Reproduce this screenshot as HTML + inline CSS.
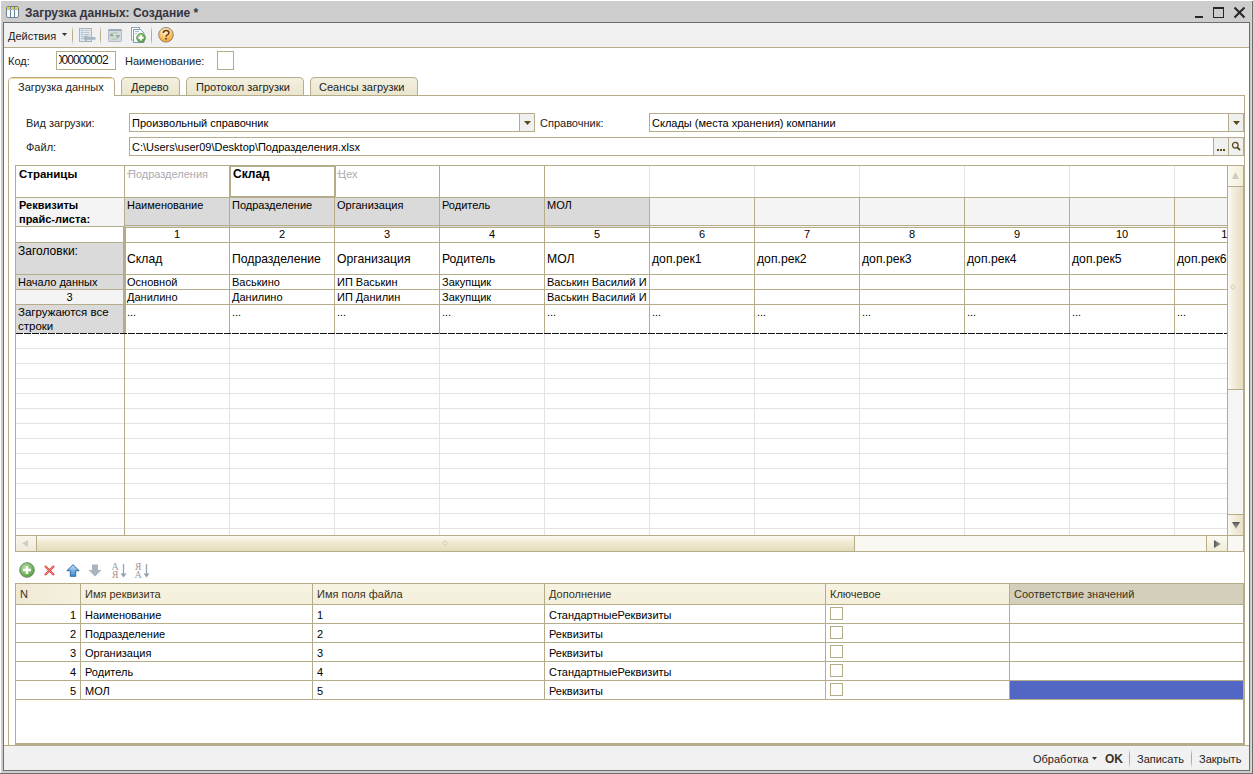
<!DOCTYPE html>
<html><head><meta charset="utf-8"><style>
html,body{margin:0;padding:0;width:1253px;height:774px;overflow:hidden;background:#fff}
body{position:relative;font-family:"Liberation Sans",sans-serif}
body>div,body>svg{position:absolute}
svg{position:absolute;overflow:visible}
</style></head><body>
<div style="left:0px;top:0px;width:1253px;height:774px;background:#ffffff;"></div>
<div style="left:1px;top:1px;width:1252px;height:773px;background:#cdcdcd;"></div>
<div style="left:3px;top:22px;width:1247px;height:749px;box-sizing:border-box;border:1px solid #6d6d6d;background:#ffffff;"></div>
<div style="left:1252px;top:1px;width:1px;height:773px;background:#6e6e6e;"></div>
<div style="left:0px;top:773px;width:1253px;height:1px;background:#6e6e6e;"></div>
<div style="left:1251px;top:1px;width:1px;height:772px;background:#d6d6d6;"></div>
<svg style="left:6px;top:6px" width="13" height="12" viewBox="0 0 13 12"><rect x="0.5" y="0.5" width="12" height="11" rx="1.5" fill="#f4fbff" stroke="#6f8290"/><line x1="4.5" y1="0.5" x2="4.5" y2="11.5" stroke="#6f8290"/><line x1="8.5" y1="0.5" x2="8.5" y2="11.5" stroke="#6f8290"/><rect x="1" y="1" width="3" height="2" fill="#f5cf1a"/><rect x="5" y="1" width="3" height="2" fill="#f5cf1a"/><rect x="9" y="1" width="3" height="2" fill="#f5cf1a"/><rect x="1" y="3" width="11" height="1" fill="#a9bccc"/></svg>
<div style="left:25px;top:7px;font-size:12px;line-height:13.404px;font-weight:700;color:#34343f;white-space:pre;">Загрузка данных: Создание *</div>
<div style="left:1195px;top:16px;width:8px;height:2px;background:#262626;"></div>
<div style="left:1213px;top:7px;width:11px;height:11px;box-sizing:border-box;border:1px solid #262626;"></div>
<div style="left:1213px;top:7px;width:11px;height:2px;background:#262626;"></div>
<svg style="left:1233px;top:6px" width="13" height="13" viewBox="0 0 13 13"><path d="M1.5 1.5 L11.5 11.5 M11.5 1.5 L1.5 11.5" stroke="#262626" stroke-width="2"/></svg>
<div style="left:4px;top:23px;width:1245px;height:24px;background:#f1f1f1;"></div>
<div style="left:4px;top:47px;width:1245px;height:1px;background:#b5ad89;"></div>
<div style="left:8px;top:30px;font-size:11px;line-height:12.287px;font-weight:400;color:#222;white-space:pre;">Действия</div>
<svg style="left:62px;top:33px" width="5" height="3"><path d="M0 0 H5 L2.5 3 Z" fill="#333"/></svg>
<div style="left:72px;top:26px;width:1px;height:19px;background:linear-gradient(#f0f0f0,#b5ad89 30%,#b5ad89 70%,#f0f0f0);"></div>
<div style="left:100px;top:26px;width:1px;height:19px;background:linear-gradient(#f0f0f0,#b5ad89 30%,#b5ad89 70%,#f0f0f0);"></div>
<div style="left:151px;top:26px;width:1px;height:19px;background:linear-gradient(#f0f0f0,#b5ad89 30%,#b5ad89 70%,#f0f0f0);"></div>
<svg style="left:74px;top:24px" width="24" height="22" viewBox="74 24 24 22"><rect x="79.5" y="28.5" width="12" height="13" fill="#e2e7eb" stroke="#a6b3bf"/><path d="M81 30.5h2M81 32.5h2M81 34.5h2M81 36.5h2M81 38.5h2" stroke="#9cc0dc"/><path d="M83.5 30.5h6M83.5 32.5h6M83.5 34.5h6M83.5 36.5h6" stroke="#c0c9d1"/><path d="M83 38.3 L87 34.5 V37 H95.5 V39.8 H87 V42.3 Z" fill="#a8b4be"/></svg>
<svg style="left:104px;top:24px" width="22" height="22" viewBox="104 24 22 22"><rect x="108.5" y="29.5" width="13" height="12" rx="0.8" fill="#d3d9de" stroke="#b3bcc4"/><rect x="108.5" y="29" width="13" height="2" fill="#a3adb6"/><path d="M111.5 36 a3.6 3.6 0 0 1 6.3 -2.4 M117.8 36 a3.6 3.6 0 0 1 -6.3 2.4" stroke="#a9c9a4" fill="none" stroke-width="1"/><path d="M109 36.3 L111.5 32.8 L114 36.3 Z M115.3 35 L117.8 38.5 L120.3 35 Z" fill="#98ae93"/></svg>
<svg style="left:126px;top:24px" width="24" height="22" viewBox="126 24 24 22"><rect x="131.5" y="27.5" width="8" height="12.5" fill="#fff" stroke="#8fa3b8"/><path d="M133.5 29.5 h7 l3.5 3.5 v9.5 h-10.5 z" fill="#f7fbff" stroke="#7f97b0"/><path d="M135 31.5h4M135 33.5h2" stroke="#a9b7c6"/><defs><radialGradient id="cg" cx="0.4" cy="0.35" r="0.7"><stop offset="0" stop-color="#a6dc8e"/><stop offset="1" stop-color="#48983a"/></radialGradient></defs><circle cx="141" cy="37.8" r="4.4" fill="url(#cg)" stroke="#5f8f55" stroke-width="0.8"/><path d="M141 35.2v5.2M138.4 37.8h5.2" stroke="#fff" stroke-width="2"/></svg>
<svg style="left:157px;top:26px" width="18" height="18" viewBox="157 26 18 18"><defs><radialGradient id="hg" cx="0.45" cy="0.25" r="0.75"><stop offset="0" stop-color="#fff4dc"/><stop offset="0.6" stop-color="#f9c46a"/><stop offset="1" stop-color="#f0a030"/></radialGradient></defs><circle cx="166" cy="34.8" r="7.3" fill="url(#hg)" stroke="#8c7a66" stroke-width="0.9"/><path d="M163.3 33 q0 -2.6 2.8 -2.6 q2.8 0 2.8 2.3 q0 1.5 -1.6 2.2 q-1.2 0.5 -1.2 1.9" fill="none" stroke="#6b3d1a" stroke-width="1.5"/><rect x="165.2" y="37.9" width="1.7" height="1.6" fill="#6b3d1a"/></svg>
<div style="left:8px;top:55px;font-size:11px;line-height:12.287px;font-weight:400;color:#222;white-space:pre;">Код:</div>
<div style="left:56px;top:51px;width:60px;height:19px;box-sizing:border-box;border:1px solid #b5ad89;background:#fff;"></div>
<div style="left:59px;top:52px;width:56px;height:17px;overflow:hidden"><div style="position:absolute;left:-3.3px;top:1px;font-size:12px;line-height:14px;white-space:pre;color:#111;letter-spacing:-0.9px">000000002</div></div>
<div style="left:125px;top:55px;font-size:11px;line-height:12.287px;font-weight:400;color:#222;white-space:pre;">Наименование:</div>
<div style="left:217px;top:51px;width:17px;height:19px;box-sizing:border-box;border:1px solid #b5ad89;background:#fff;"></div>
<div style="left:121px;top:77px;width:59px;height:19px;box-sizing:border-box;border:1px solid #b5ad89;border-bottom:none;border-radius:5px 5px 0 0;background:linear-gradient(#f3f0e0,#e9e4cc)"></div>
<div style="left:186px;top:77px;width:118px;height:19px;box-sizing:border-box;border:1px solid #b5ad89;border-bottom:none;border-radius:5px 5px 0 0;background:linear-gradient(#f3f0e0,#e9e4cc)"></div>
<div style="left:310px;top:77px;width:108px;height:19px;box-sizing:border-box;border:1px solid #b5ad89;border-bottom:none;border-radius:5px 5px 0 0;background:linear-gradient(#f3f0e0,#e9e4cc)"></div>
<div style="left:8px;top:95px;width:1237px;height:1px;background:#b5ad89;"></div>
<div style="left:8px;top:77px;width:107px;height:19px;box-sizing:border-box;border:1px solid #b5ad89;border-bottom:none;border-radius:5px 5px 0 0;background:#fff"></div>
<div style="left:10px;top:78px;width:103px;height:1px;background:#f9d79a;border-radius:3px 3px 0 0"></div>
<div style="left:18px;top:81px;font-size:11px;line-height:12.287px;font-weight:400;color:#222;white-space:pre;">Загрузка данных</div>
<div style="left:131px;top:81px;font-size:11px;line-height:12.287px;font-weight:400;color:#222;white-space:pre;">Дерево</div>
<div style="left:196px;top:81px;font-size:11px;line-height:12.287px;font-weight:400;color:#222;white-space:pre;">Протокол загрузки</div>
<div style="left:319px;top:81px;font-size:11px;line-height:12.287px;font-weight:400;color:#222;white-space:pre;">Сеансы загрузки</div>
<div style="left:8px;top:96px;width:1px;height:650px;background:#b5ad89;"></div>
<div style="left:1244px;top:95px;width:1px;height:651px;background:#b5ad89;"></div>
<div style="left:4px;top:745px;width:1245px;height:1px;background:#b5ad89;"></div>
<div style="left:26px;top:117px;font-size:11px;line-height:12.287px;font-weight:400;color:#222;white-space:pre;">Вид загрузки:</div>
<div style="left:129px;top:113px;width:406px;height:19px;box-sizing:border-box;border:1px solid #b5ad89;background:#fff;"></div>
<div style="left:519px;top:114px;width:15px;height:17px;background:#f0f0f0;border-left:1px solid #b5ad89;box-sizing:border-box"></div>
<svg style="left:524px;top:121px" width="7" height="4"><path d="M0 0 H7 L3.5 4 Z" fill="#5a4a1a"/></svg>
<div style="left:540px;top:117px;font-size:11px;line-height:12.287px;font-weight:400;color:#222;white-space:pre;">Справочник:</div>
<div style="left:649px;top:113px;width:595px;height:19px;box-sizing:border-box;border:1px solid #b5ad89;background:#fff;"></div>
<div style="left:1228px;top:114px;width:15px;height:17px;background:#f0f0f0;border-left:1px solid #b5ad89;box-sizing:border-box"></div>
<svg style="left:1233px;top:121px" width="7" height="4"><path d="M0 0 H7 L3.5 4 Z" fill="#5a4a1a"/></svg>
<div style="left:652px;top:117px;font-size:11px;line-height:12.287px;font-weight:400;color:#000;white-space:pre;">Склады (места хранения) компании</div>
<div style="left:132px;top:117px;font-size:11px;line-height:12.287px;font-weight:400;color:#000;white-space:pre;">Произвольный справочник</div>
<div style="left:26px;top:141px;font-size:11px;line-height:12.287px;font-weight:400;color:#222;white-space:pre;">Файл:</div>
<div style="left:129px;top:137px;width:1115px;height:19px;box-sizing:border-box;border:1px solid #b5ad89;background:#fff;"></div>
<div style="left:1213px;top:138px;width:15px;height:17px;background:#f0f0f0;border-left:1px solid #b5ad89;box-sizing:border-box"></div>
<div style="left:1228px;top:138px;width:15px;height:17px;background:#f0f0f0;border-left:1px solid #b5ad89;box-sizing:border-box"></div>
<div style="left:1217px;top:149px;width:2px;height:2px;background:#5a4a1a;"></div>
<div style="left:1220px;top:149px;width:2px;height:2px;background:#5a4a1a;"></div>
<div style="left:1223px;top:149px;width:2px;height:2px;background:#5a4a1a;"></div>
<svg style="left:1230px;top:140px" width="11" height="12"><circle cx="5.3" cy="5.2" r="2.8" fill="none" stroke="#5a4a1a" stroke-width="1.3"/><path d="M7.3 7.3 L10 10" stroke="#5a4a1a" stroke-width="1.8"/></svg>
<div style="left:132px;top:141px;font-size:11px;line-height:12.287px;font-weight:400;color:#000;white-space:pre;">C:\Users\user09\Desktop\Подразделения.xlsx</div>
<div style="left:16px;top:198px;width:108px;height:28px;background:#f4f4f4;"></div>
<div style="left:125px;top:198px;width:104px;height:29px;background:#dadada;"></div>
<div style="left:230px;top:198px;width:104px;height:29px;background:#dadada;"></div>
<div style="left:335px;top:198px;width:104px;height:29px;background:#dadada;"></div>
<div style="left:440px;top:198px;width:104px;height:29px;background:#dadada;"></div>
<div style="left:545px;top:198px;width:104px;height:29px;background:#dadada;"></div>
<div style="left:650px;top:198px;width:578px;height:29px;background:#f4f4f4;"></div>
<div style="left:16px;top:243px;width:107px;height:31px;background:#dadada;"></div>
<div style="left:16px;top:275px;width:107px;height:14px;background:#dadada;"></div>
<div style="left:16px;top:290px;width:107px;height:14px;background:#f4f4f4;"></div>
<div style="left:16px;top:305px;width:107px;height:28px;background:#dadada;"></div>
<div style="left:16px;top:348px;width:1212px;height:1px;background:#e3e3e3;"></div>
<div style="left:16px;top:363px;width:1212px;height:1px;background:#e3e3e3;"></div>
<div style="left:16px;top:378px;width:1212px;height:1px;background:#e3e3e3;"></div>
<div style="left:16px;top:393px;width:1212px;height:1px;background:#e3e3e3;"></div>
<div style="left:16px;top:408px;width:1212px;height:1px;background:#e3e3e3;"></div>
<div style="left:16px;top:423px;width:1212px;height:1px;background:#e3e3e3;"></div>
<div style="left:16px;top:438px;width:1212px;height:1px;background:#e3e3e3;"></div>
<div style="left:16px;top:453px;width:1212px;height:1px;background:#e3e3e3;"></div>
<div style="left:16px;top:468px;width:1212px;height:1px;background:#e3e3e3;"></div>
<div style="left:16px;top:483px;width:1212px;height:1px;background:#e3e3e3;"></div>
<div style="left:16px;top:498px;width:1212px;height:1px;background:#e3e3e3;"></div>
<div style="left:16px;top:513px;width:1212px;height:1px;background:#e3e3e3;"></div>
<div style="left:16px;top:528px;width:1212px;height:1px;background:#e3e3e3;"></div>
<div style="left:229px;top:334px;width:1px;height:201px;background:#e3e3e3;"></div>
<div style="left:229px;top:166px;width:1px;height:31px;background:#e3e3e3;"></div>
<div style="left:334px;top:334px;width:1px;height:201px;background:#e3e3e3;"></div>
<div style="left:334px;top:166px;width:1px;height:31px;background:#e3e3e3;"></div>
<div style="left:439px;top:334px;width:1px;height:201px;background:#e3e3e3;"></div>
<div style="left:439px;top:166px;width:1px;height:31px;background:#e3e3e3;"></div>
<div style="left:544px;top:334px;width:1px;height:201px;background:#e3e3e3;"></div>
<div style="left:544px;top:166px;width:1px;height:31px;background:#e3e3e3;"></div>
<div style="left:649px;top:334px;width:1px;height:201px;background:#e3e3e3;"></div>
<div style="left:649px;top:166px;width:1px;height:31px;background:#e3e3e3;"></div>
<div style="left:754px;top:334px;width:1px;height:201px;background:#e3e3e3;"></div>
<div style="left:754px;top:166px;width:1px;height:31px;background:#e3e3e3;"></div>
<div style="left:859px;top:334px;width:1px;height:201px;background:#e3e3e3;"></div>
<div style="left:859px;top:166px;width:1px;height:31px;background:#e3e3e3;"></div>
<div style="left:964px;top:334px;width:1px;height:201px;background:#e3e3e3;"></div>
<div style="left:964px;top:166px;width:1px;height:31px;background:#e3e3e3;"></div>
<div style="left:1069px;top:334px;width:1px;height:201px;background:#e3e3e3;"></div>
<div style="left:1069px;top:166px;width:1px;height:31px;background:#e3e3e3;"></div>
<div style="left:1174px;top:334px;width:1px;height:201px;background:#e3e3e3;"></div>
<div style="left:1174px;top:166px;width:1px;height:31px;background:#e3e3e3;"></div>
<div style="left:15px;top:165px;width:1213px;height:1px;background:#b5ad89;"></div>
<div style="left:15px;top:197px;width:1213px;height:1px;background:#b5ad89;"></div>
<div style="left:15px;top:226px;width:110px;height:1px;background:#b5ad89;"></div>
<div style="left:125px;top:225px;width:1103px;height:1px;background:#b5ad89;"></div>
<div style="left:125px;top:227px;width:1103px;height:1px;background:#b5ad89;"></div>
<div style="left:15px;top:242px;width:1213px;height:1px;background:#b5ad89;"></div>
<div style="left:15px;top:274px;width:1213px;height:1px;background:#b5ad89;"></div>
<div style="left:15px;top:289px;width:1213px;height:1px;background:#b5ad89;"></div>
<div style="left:15px;top:304px;width:1213px;height:1px;background:#b5ad89;"></div>
<div style="left:15px;top:165px;width:1px;height:371px;background:#b5ad89;"></div>
<div style="left:124px;top:165px;width:1px;height:62px;background:#b5ad89;"></div>
<div style="left:123px;top:227px;width:3px;height:107px;background:#b5ad89;"></div>
<div style="left:124px;top:334px;width:1px;height:202px;background:#b5ad89;"></div>
<div style="left:229px;top:165px;width:1px;height:33px;background:#b5ad89;"></div>
<div style="left:334px;top:165px;width:1px;height:33px;background:#b5ad89;"></div>
<div style="left:439px;top:165px;width:1px;height:33px;background:#b5ad89;"></div>
<div style="left:544px;top:165px;width:1px;height:33px;background:#b5ad89;"></div>
<div style="left:229px;top:197px;width:1px;height:137px;background:#b5ad89;"></div>
<div style="left:334px;top:197px;width:1px;height:137px;background:#b5ad89;"></div>
<div style="left:439px;top:197px;width:1px;height:137px;background:#b5ad89;"></div>
<div style="left:544px;top:197px;width:1px;height:137px;background:#b5ad89;"></div>
<div style="left:649px;top:197px;width:1px;height:137px;background:#b5ad89;"></div>
<div style="left:754px;top:197px;width:1px;height:137px;background:#b5ad89;"></div>
<div style="left:859px;top:197px;width:1px;height:137px;background:#b5ad89;"></div>
<div style="left:964px;top:197px;width:1px;height:137px;background:#b5ad89;"></div>
<div style="left:1069px;top:197px;width:1px;height:137px;background:#b5ad89;"></div>
<div style="left:1174px;top:197px;width:1px;height:137px;background:#b5ad89;"></div>
<div style="left:229px;top:165px;width:107px;height:33px;box-sizing:border-box;border:1px solid #b5ad89;border-width:2px"></div>
<div style="left:16px;top:333px;width:1212px;height:1px;background:repeating-linear-gradient(90deg,#111 0 7px,transparent 7px 8px)"></div>
<div style="left:15px;top:535px;width:1229px;height:1px;background:#b5ad89;"></div>
<div style="left:19px;top:168px;font-size:11.5px;line-height:12.845px;font-weight:700;color:#000;white-space:pre;">Страницы</div>
<div style="left:128px;top:168px;font-size:11px;line-height:12.287px;font-weight:400;color:#ababb4;white-space:pre;">Подразделения</div>
<div style="left:127px;top:173px;width:8px;height:1px;background:#b8b8b8;"></div>
<div style="left:233px;top:168px;font-size:12px;line-height:13.404px;font-weight:700;color:#000;white-space:pre;">Склад</div>
<div style="left:338px;top:168px;font-size:11px;line-height:12.287px;font-weight:400;color:#ababb4;white-space:pre;">Цех</div>
<div style="left:337px;top:173px;width:8px;height:1px;background:#b8b8b8;"></div>
<div style="left:19px;top:199px;font-size:11px;line-height:12.287px;font-weight:700;color:#000;white-space:pre;">Реквизиты</div>
<div style="left:19px;top:213px;font-size:11px;line-height:12.287px;font-weight:700;color:#000;white-space:pre;">прайс-листа:</div>
<div style="left:127px;top:199px;font-size:11px;line-height:12.287px;font-weight:400;color:#000;white-space:pre;">Наименование</div>
<div style="left:232px;top:199px;font-size:11px;line-height:12.287px;font-weight:400;color:#000;white-space:pre;">Подразделение</div>
<div style="left:337px;top:199px;font-size:11px;line-height:12.287px;font-weight:400;color:#000;white-space:pre;">Организация</div>
<div style="left:442px;top:199px;font-size:11px;line-height:12.287px;font-weight:400;color:#000;white-space:pre;">Родитель</div>
<div style="left:547px;top:199px;font-size:11px;line-height:12.287px;font-weight:400;color:#000;white-space:pre;">МОЛ</div>
<div style="left:125px;top:228px;font-size:11px;line-height:12.287px;font-weight:400;color:#000;white-space:pre;width:104px;text-align:center;">1</div>
<div style="left:230px;top:228px;font-size:11px;line-height:12.287px;font-weight:400;color:#000;white-space:pre;width:104px;text-align:center;">2</div>
<div style="left:335px;top:228px;font-size:11px;line-height:12.287px;font-weight:400;color:#000;white-space:pre;width:104px;text-align:center;">3</div>
<div style="left:440px;top:228px;font-size:11px;line-height:12.287px;font-weight:400;color:#000;white-space:pre;width:104px;text-align:center;">4</div>
<div style="left:545px;top:228px;font-size:11px;line-height:12.287px;font-weight:400;color:#000;white-space:pre;width:104px;text-align:center;">5</div>
<div style="left:650px;top:228px;font-size:11px;line-height:12.287px;font-weight:400;color:#000;white-space:pre;width:104px;text-align:center;">6</div>
<div style="left:755px;top:228px;font-size:11px;line-height:12.287px;font-weight:400;color:#000;white-space:pre;width:104px;text-align:center;">7</div>
<div style="left:860px;top:228px;font-size:11px;line-height:12.287px;font-weight:400;color:#000;white-space:pre;width:104px;text-align:center;">8</div>
<div style="left:965px;top:228px;font-size:11px;line-height:12.287px;font-weight:400;color:#000;white-space:pre;width:104px;text-align:center;">9</div>
<div style="left:1070px;top:228px;font-size:11px;line-height:12.287px;font-weight:400;color:#000;white-space:pre;width:104px;text-align:center;">10</div>
<div style="left:1175px;top:228px;font-size:11px;line-height:12.287px;font-weight:400;color:#000;white-space:pre;width:104px;text-align:center;">11</div>
<div style="left:127px;top:253px;font-size:12.2px;line-height:13.627px;font-weight:400;color:#000;white-space:pre;">Склад</div>
<div style="left:232px;top:253px;font-size:12.2px;line-height:13.627px;font-weight:400;color:#000;white-space:pre;">Подразделение</div>
<div style="left:337px;top:253px;font-size:12.2px;line-height:13.627px;font-weight:400;color:#000;white-space:pre;">Организация</div>
<div style="left:442px;top:253px;font-size:12.2px;line-height:13.627px;font-weight:400;color:#000;white-space:pre;">Родитель</div>
<div style="left:547px;top:253px;font-size:12.2px;line-height:13.627px;font-weight:400;color:#000;white-space:pre;">МОЛ</div>
<div style="left:652px;top:253px;font-size:12.2px;line-height:13.627px;font-weight:400;color:#000;white-space:pre;">доп.рек1</div>
<div style="left:757px;top:253px;font-size:12.2px;line-height:13.627px;font-weight:400;color:#000;white-space:pre;">доп.рек2</div>
<div style="left:862px;top:253px;font-size:12.2px;line-height:13.627px;font-weight:400;color:#000;white-space:pre;">доп.рек3</div>
<div style="left:967px;top:253px;font-size:12.2px;line-height:13.627px;font-weight:400;color:#000;white-space:pre;">доп.рек4</div>
<div style="left:1072px;top:253px;font-size:12.2px;line-height:13.627px;font-weight:400;color:#000;white-space:pre;">доп.рек5</div>
<div style="left:1177px;top:253px;font-size:12.2px;line-height:13.627px;font-weight:400;color:#000;white-space:pre;">доп.рек6</div>
<div style="left:18px;top:245px;font-size:12px;line-height:13.404px;font-weight:400;color:#000;white-space:pre;">Заголовки:</div>
<div style="left:18px;top:276px;font-size:11px;line-height:12.287px;font-weight:400;color:#000;white-space:pre;">Начало данных</div>
<div style="left:16px;top:291px;font-size:11px;line-height:12.287px;font-weight:400;color:#000;white-space:pre;width:107px;text-align:center;">3</div>
<div style="left:18px;top:306px;font-size:11.5px;line-height:12.845px;font-weight:400;color:#000;white-space:pre;">Загружаются все</div>
<div style="left:18px;top:320px;font-size:11.5px;line-height:12.845px;font-weight:400;color:#000;white-space:pre;">строки</div>
<div style="left:127px;top:276px;font-size:11px;line-height:12.287px;font-weight:400;color:#000;white-space:pre;">Основной</div>
<div style="left:127px;top:291px;font-size:11px;line-height:12.287px;font-weight:400;color:#000;white-space:pre;">Данилино</div>
<div style="left:232px;top:276px;font-size:11px;line-height:12.287px;font-weight:400;color:#000;white-space:pre;">Васькино</div>
<div style="left:232px;top:291px;font-size:11px;line-height:12.287px;font-weight:400;color:#000;white-space:pre;">Данилино</div>
<div style="left:337px;top:276px;font-size:11px;line-height:12.287px;font-weight:400;color:#000;white-space:pre;">ИП Васькин</div>
<div style="left:337px;top:291px;font-size:11px;line-height:12.287px;font-weight:400;color:#000;white-space:pre;">ИП Данилин</div>
<div style="left:442px;top:276px;font-size:11px;line-height:12.287px;font-weight:400;color:#000;white-space:pre;">Закупщик</div>
<div style="left:442px;top:291px;font-size:11px;line-height:12.287px;font-weight:400;color:#000;white-space:pre;">Закупщик</div>
<div style="left:547px;top:276px;font-size:11px;line-height:12.287px;font-weight:400;color:#000;white-space:pre;">Васькин Василий И</div>
<div style="left:547px;top:291px;font-size:11px;line-height:12.287px;font-weight:400;color:#000;white-space:pre;">Васькин Василий И</div>
<div style="left:127px;top:306px;font-size:11px;line-height:12.287px;font-weight:400;color:#000;white-space:pre;">...</div>
<div style="left:232px;top:306px;font-size:11px;line-height:12.287px;font-weight:400;color:#000;white-space:pre;">...</div>
<div style="left:337px;top:306px;font-size:11px;line-height:12.287px;font-weight:400;color:#000;white-space:pre;">...</div>
<div style="left:442px;top:306px;font-size:11px;line-height:12.287px;font-weight:400;color:#000;white-space:pre;">...</div>
<div style="left:547px;top:306px;font-size:11px;line-height:12.287px;font-weight:400;color:#000;white-space:pre;">...</div>
<div style="left:652px;top:306px;font-size:11px;line-height:12.287px;font-weight:400;color:#000;white-space:pre;">...</div>
<div style="left:757px;top:306px;font-size:11px;line-height:12.287px;font-weight:400;color:#000;white-space:pre;">...</div>
<div style="left:862px;top:306px;font-size:11px;line-height:12.287px;font-weight:400;color:#000;white-space:pre;">...</div>
<div style="left:967px;top:306px;font-size:11px;line-height:12.287px;font-weight:400;color:#000;white-space:pre;">...</div>
<div style="left:1072px;top:306px;font-size:11px;line-height:12.287px;font-weight:400;color:#000;white-space:pre;">...</div>
<div style="left:1177px;top:306px;font-size:11px;line-height:12.287px;font-weight:400;color:#000;white-space:pre;">...</div>
<div style="left:1227px;top:166px;width:16px;height:369px;background:#fff;"></div>
<div style="left:1227px;top:166px;width:1px;height:370px;background:#b5ad89;"></div>
<div style="left:1228px;top:166px;width:15px;height:369px;background:#f5f5f5;"></div>
<div style="left:1228px;top:187px;width:15px;height:202px;background:linear-gradient(90deg,#fdf9f6,#f1ead6 45%,#e6dcc2);"></div>
<div style="left:1228px;top:389px;width:15px;height:1px;background:#b5ad89;"></div>
<div style="left:1228px;top:166px;width:15px;height:20px;background:linear-gradient(90deg,#fbfaf0,#f3efd9);"></div>
<div style="left:1228px;top:186px;width:15px;height:1px;background:#b5ad89;"></div>
<svg style="left:1232px;top:172px" width="7" height="7"><path d="M0 7 L3.5 0 L7 7 Z" fill="#cfccbe"/></svg>
<svg style="left:1230px;top:284px" width="6" height="6"><circle cx="3" cy="3" r="2" fill="none" stroke="#d6cfb6" stroke-width="1"/></svg>
<div style="left:1228px;top:514px;width:15px;height:1px;background:#b5ad89;"></div>
<div style="left:1228px;top:515px;width:15px;height:20px;background:linear-gradient(90deg,#fbf7f2,#f1ecd8 50%,#e9e0c8);"></div>
<svg style="left:1232px;top:522px" width="8" height="7"><defs><linearGradient id="dg" x1="0" y1="0" x2="0" y2="1"><stop offset="0" stop-color="#555"/><stop offset="1" stop-color="#aaa"/></linearGradient></defs><path d="M0 0 L8 0 L4 7 Z" fill="url(#dg)"/></svg>
<div style="left:16px;top:536px;width:1211px;height:15px;background:#f9f8f3;"></div>
<div style="left:16px;top:536px;width:20px;height:15px;background:linear-gradient(#f8f7ec,#efe9d8);"></div>
<div style="left:36px;top:536px;width:1px;height:16px;background:#b5ad89;"></div>
<svg style="left:22px;top:540px" width="6" height="7"><path d="M6 0 L0 3.5 L6 7 Z" fill="#d2cfc2"/></svg>
<div style="left:37px;top:536px;width:817px;height:15px;background:linear-gradient(#fbfaf3,#f2ebd2 40%,#e2dbbb);"></div>
<div style="left:854px;top:536px;width:1px;height:16px;background:#b5ad89;"></div>
<svg style="left:442px;top:540px" width="6" height="6"><circle cx="3" cy="3" r="2" fill="none" stroke="#d6cfb6" stroke-width="1"/></svg>
<div style="left:1206px;top:536px;width:1px;height:16px;background:#b5ad89;"></div>
<div style="left:1207px;top:536px;width:20px;height:15px;background:linear-gradient(#fbfaf0,#f1ecd6);"></div>
<svg style="left:1214px;top:540px" width="7" height="8"><defs><linearGradient id="rg" x1="0" y1="0" x2="1" y2="0"><stop offset="0" stop-color="#555"/><stop offset="1" stop-color="#aaa"/></linearGradient></defs><path d="M0 0 L7 4 L0 8 Z" fill="url(#rg)"/></svg>
<div style="left:1227px;top:536px;width:1px;height:16px;background:#b5ad89;"></div>
<div style="left:1228px;top:536px;width:15px;height:15px;background:#f9f8f3;"></div>
<div style="left:15px;top:535px;width:1px;height:17px;background:#b5ad89;"></div>
<div style="left:15px;top:551px;width:1229px;height:1px;background:#b5ad89;"></div>
<div style="left:1243px;top:165px;width:1px;height:387px;background:#b5ad89;"></div>
<div style="left:15px;top:165px;width:1229px;height:1px;background:#b5ad89;"></div>
<svg style="left:19px;top:562px" width="16" height="16" viewBox="0 0 16 16"><defs><radialGradient id="ga" cx="0.4" cy="0.35" r="0.7"><stop offset="0" stop-color="#b6e3a0"/><stop offset="1" stop-color="#4f9a3c"/></radialGradient></defs><circle cx="8" cy="8" r="7.3" fill="url(#ga)" stroke="#6d8f64"/><path d="M8 4v8M4 8h8" stroke="#fff" stroke-width="2.4"/></svg>
<svg style="left:43px;top:564px" width="13" height="13" viewBox="0 0 13 13"><path d="M2 2 L11 11 M11 2 L2 11" stroke="#e24a44" stroke-width="2.3"/><path d="M2.5 2.5 L10.5 10.5 M10.5 2.5 L2.5 10.5" stroke="#f7a29c" stroke-width="0.7"/></svg>
<svg style="left:66px;top:564px" width="14" height="13" viewBox="0 0 14 13"><defs><linearGradient id="ug" x1="0" y1="0" x2="0" y2="1"><stop offset="0" stop-color="#bfe0f8"/><stop offset="1" stop-color="#3f8ad0"/></linearGradient></defs><path d="M7 0.7 L13.2 6.7 H9.7 V12.3 H4.3 V6.7 H0.8 Z" fill="url(#ug)" stroke="#2f69a6" stroke-width="1"/></svg>
<svg style="left:88px;top:564px" width="14" height="13" viewBox="0 0 14 13"><path d="M7 12.5 L13.5 6 H10 V0.5 H4 V6 H0.5 Z" fill="#a9b4be"/></svg>
<svg style="left:111px;top:561px" width="17" height="18" viewBox="0 0 17 18"><text x="0.5" y="8.5" font-family="Liberation Serif" font-size="10" fill="#94a3ae">A</text><text x="1" y="16.5" font-family="Liberation Serif" font-size="9.5" fill="#a88c86">Я</text><path d="M12.5 3 V15.5" stroke="#94a3ae" stroke-width="1.3"/><path d="M9.5 12.5 L12.5 16.5 L15.5 12.5 Z" fill="#94a3ae"/></svg>
<svg style="left:134px;top:561px" width="17" height="18" viewBox="0 0 17 18"><text x="1" y="8.5" font-family="Liberation Serif" font-size="9.5" fill="#a88c86">Я</text><text x="0.5" y="16.5" font-family="Liberation Serif" font-size="10" fill="#94a3ae">A</text><path d="M12.5 3 V15.5" stroke="#94a3ae" stroke-width="1.3"/><path d="M9.5 12.5 L12.5 16.5 L15.5 12.5 Z" fill="#94a3ae"/></svg>
<div style="left:16px;top:584px;width:1227px;height:20px;background:linear-gradient(#f7f3e3,#f3efdb);"></div>
<div style="left:1010px;top:584px;width:233px;height:20px;background:#d3cfbb;"></div>
<div style="left:16px;top:584px;width:64px;height:20px;background:linear-gradient(90deg,#efe9d4,#f5f1df);"></div>
<div style="left:15px;top:583px;width:1229px;height:1px;background:#b5ad89;"></div>
<div style="left:15px;top:604px;width:1229px;height:1px;background:#b5ad89;"></div>
<div style="left:15px;top:623px;width:1229px;height:1px;background:#b5ad89;"></div>
<div style="left:15px;top:642px;width:1229px;height:1px;background:#b5ad89;"></div>
<div style="left:15px;top:661px;width:1229px;height:1px;background:#b5ad89;"></div>
<div style="left:15px;top:680px;width:1229px;height:1px;background:#b5ad89;"></div>
<div style="left:15px;top:699px;width:1229px;height:1px;background:#b5ad89;"></div>
<div style="left:80px;top:583px;width:1px;height:117px;background:#b5ad89;"></div>
<div style="left:312px;top:583px;width:1px;height:117px;background:#b5ad89;"></div>
<div style="left:544px;top:583px;width:1px;height:117px;background:#b5ad89;"></div>
<div style="left:825px;top:583px;width:1px;height:117px;background:#b5ad89;"></div>
<div style="left:1009px;top:583px;width:1px;height:117px;background:#b5ad89;"></div>
<div style="left:15px;top:583px;width:1px;height:163px;background:#b5ad89;"></div>
<div style="left:1243px;top:583px;width:2px;height:163px;background:#b5ad89;"></div>
<div style="left:15px;top:743px;width:1230px;height:2px;background:#b5ad89;"></div>
<div style="left:20px;top:588px;font-size:11px;line-height:12.287px;font-weight:400;color:#3a3222;white-space:pre;">N</div>
<div style="left:85px;top:588px;font-size:11px;line-height:12.287px;font-weight:400;color:#3a3222;white-space:pre;">Имя реквизита</div>
<div style="left:317px;top:588px;font-size:11px;line-height:12.287px;font-weight:400;color:#3a3222;white-space:pre;">Имя поля файла</div>
<div style="left:549px;top:588px;font-size:11px;line-height:12.287px;font-weight:400;color:#3a3222;white-space:pre;">Дополнение</div>
<div style="left:830px;top:588px;font-size:11px;line-height:12.287px;font-weight:400;color:#3a3222;white-space:pre;">Ключевое</div>
<div style="left:1014px;top:588px;font-size:11px;line-height:12.287px;font-weight:400;color:#3a3222;white-space:pre;">Соответствие значений</div>
<div style="left:16px;top:609px;font-size:11px;line-height:12.287px;font-weight:400;color:#000;white-space:pre;width:60px;text-align:right;">1</div>
<div style="left:85px;top:609px;font-size:11px;line-height:12.287px;font-weight:400;color:#000;white-space:pre;">Наименование</div>
<div style="left:317px;top:609px;font-size:11px;line-height:12.287px;font-weight:400;color:#000;white-space:pre;">1</div>
<div style="left:549px;top:609px;font-size:11px;line-height:12.287px;font-weight:400;color:#000;white-space:pre;">СтандартныеРеквизиты</div>
<div style="left:830px;top:607px;width:13px;height:13px;box-sizing:border-box;border:1px solid #b5ad89;background:#fff;"></div>
<div style="left:16px;top:628px;font-size:11px;line-height:12.287px;font-weight:400;color:#000;white-space:pre;width:60px;text-align:right;">2</div>
<div style="left:85px;top:628px;font-size:11px;line-height:12.287px;font-weight:400;color:#000;white-space:pre;">Подразделение</div>
<div style="left:317px;top:628px;font-size:11px;line-height:12.287px;font-weight:400;color:#000;white-space:pre;">2</div>
<div style="left:549px;top:628px;font-size:11px;line-height:12.287px;font-weight:400;color:#000;white-space:pre;">Реквизиты</div>
<div style="left:830px;top:626px;width:13px;height:13px;box-sizing:border-box;border:1px solid #b5ad89;background:#fff;"></div>
<div style="left:16px;top:647px;font-size:11px;line-height:12.287px;font-weight:400;color:#000;white-space:pre;width:60px;text-align:right;">3</div>
<div style="left:85px;top:647px;font-size:11px;line-height:12.287px;font-weight:400;color:#000;white-space:pre;">Организация</div>
<div style="left:317px;top:647px;font-size:11px;line-height:12.287px;font-weight:400;color:#000;white-space:pre;">3</div>
<div style="left:549px;top:647px;font-size:11px;line-height:12.287px;font-weight:400;color:#000;white-space:pre;">Реквизиты</div>
<div style="left:830px;top:645px;width:13px;height:13px;box-sizing:border-box;border:1px solid #b5ad89;background:#fff;"></div>
<div style="left:16px;top:666px;font-size:11px;line-height:12.287px;font-weight:400;color:#000;white-space:pre;width:60px;text-align:right;">4</div>
<div style="left:85px;top:666px;font-size:11px;line-height:12.287px;font-weight:400;color:#000;white-space:pre;">Родитель</div>
<div style="left:317px;top:666px;font-size:11px;line-height:12.287px;font-weight:400;color:#000;white-space:pre;">4</div>
<div style="left:549px;top:666px;font-size:11px;line-height:12.287px;font-weight:400;color:#000;white-space:pre;">СтандартныеРеквизиты</div>
<div style="left:830px;top:664px;width:13px;height:13px;box-sizing:border-box;border:1px solid #b5ad89;background:#fff;"></div>
<div style="left:16px;top:685px;font-size:11px;line-height:12.287px;font-weight:400;color:#000;white-space:pre;width:60px;text-align:right;">5</div>
<div style="left:85px;top:685px;font-size:11px;line-height:12.287px;font-weight:400;color:#000;white-space:pre;">МОЛ</div>
<div style="left:317px;top:685px;font-size:11px;line-height:12.287px;font-weight:400;color:#000;white-space:pre;">5</div>
<div style="left:549px;top:685px;font-size:11px;line-height:12.287px;font-weight:400;color:#000;white-space:pre;">Реквизиты</div>
<div style="left:830px;top:683px;width:13px;height:13px;box-sizing:border-box;border:1px solid #b5ad89;background:#fff;"></div>
<div style="left:1010px;top:681px;width:233px;height:18px;background:#5267c4;"></div>
<div style="left:4px;top:746px;width:1245px;height:24px;background:#f1f1f1;"></div>
<div style="left:1033px;top:753px;font-size:11px;line-height:12.287px;font-weight:400;color:#222;white-space:pre;">Обработка</div>
<svg style="left:1092px;top:757px" width="5" height="3"><path d="M0 0 H5 L2.5 3 Z" fill="#333"/></svg>
<div style="left:1105px;top:753px;font-size:12px;line-height:13.404px;font-weight:700;color:#3a3420;white-space:pre;">OK</div>
<div style="left:1129px;top:749px;width:1px;height:19px;background:linear-gradient(#f0f0f0,#b5ad89 30%,#b5ad89 70%,#f0f0f0);"></div>
<div style="left:1191px;top:749px;width:1px;height:19px;background:linear-gradient(#f0f0f0,#b5ad89 30%,#b5ad89 70%,#f0f0f0);"></div>
<div style="left:1137px;top:753px;font-size:11px;line-height:12.287px;font-weight:400;color:#222;white-space:pre;">Записать</div>
<div style="left:1199px;top:753px;font-size:11px;line-height:12.287px;font-weight:400;color:#222;white-space:pre;">Закрыть</div>
</body></html>
